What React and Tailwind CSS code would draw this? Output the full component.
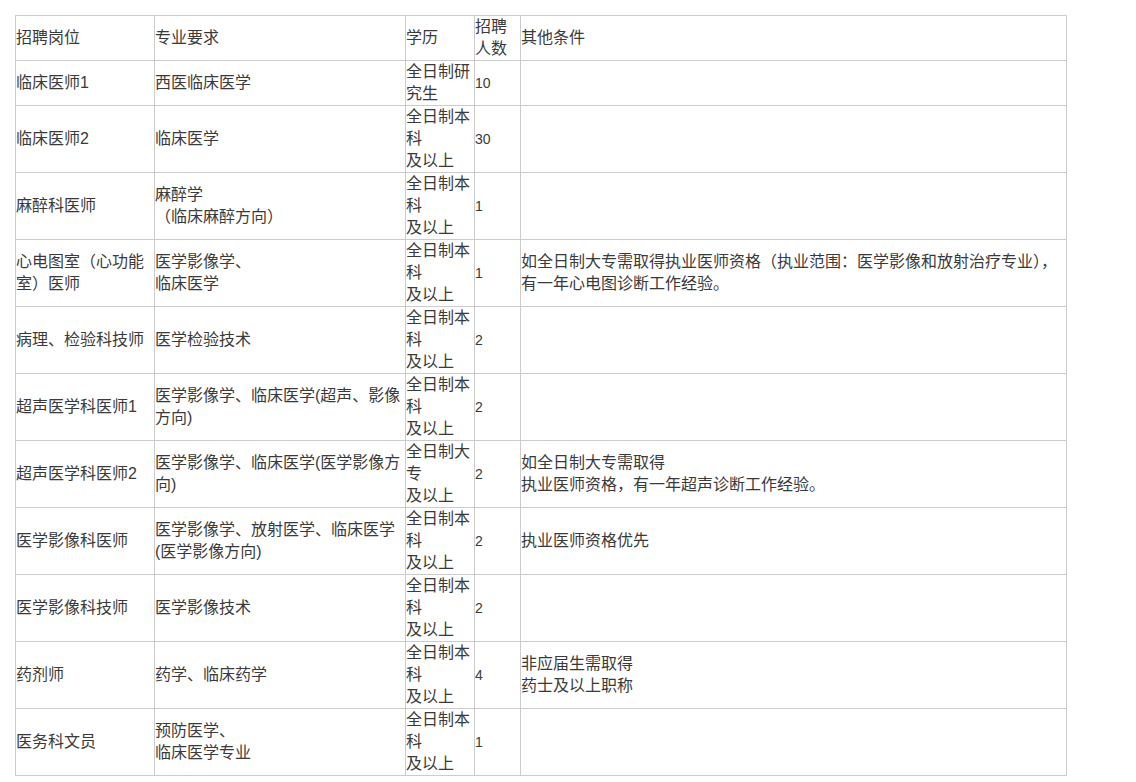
import React from 'react';

const rows = [
  { pos: '临床医师1', major: ['西医临床医学'], edu: ['全日制研', '究生'], num: '10', other: [] },
  { pos: '临床医师2', major: ['临床医学'], edu: ['全日制本', '科', '及以上'], num: '30', other: [] },
  { pos: '麻醉科医师', major: ['麻醉学', '（临床麻醉方向）'], edu: ['全日制本', '科', '及以上'], num: '1', other: [] },
  {
    pos: ['心电图室（心功能', '室）医师'],
    major: ['医学影像学、', '临床医学'],
    edu: ['全日制本', '科', '及以上'],
    num: '1',
    other: ['如全日制大专需取得执业医师资格（执业范围：医学影像和放射治疗专业），', '有一年心电图诊断工作经验。'],
  },
  { pos: '病理、检验科技师', major: ['医学检验技术'], edu: ['全日制本', '科', '及以上'], num: '2', other: [] },
  { pos: '超声医学科医师1', major: ['医学影像学、临床医学(超声、影像', '方向)'], edu: ['全日制本', '科', '及以上'], num: '2', other: [] },
  {
    pos: '超声医学科医师2',
    major: ['医学影像学、临床医学(医学影像方', '向)'],
    edu: ['全日制大', '专', '及以上'],
    num: '2',
    other: ['如全日制大专需取得', '执业医师资格，有一年超声诊断工作经验。'],
  },
  {
    pos: '医学影像科医师',
    major: ['医学影像学、放射医学、临床医学', '(医学影像方向)'],
    edu: ['全日制本', '科', '及以上'],
    num: '2',
    other: ['执业医师资格优先'],
  },
  { pos: '医学影像科技师', major: ['医学影像技术'], edu: ['全日制本', '科', '及以上'], num: '2', other: [] },
  { pos: '药剂师', major: ['药学、临床药学'], edu: ['全日制本', '科', '及以上'], num: '4', other: ['非应届生需取得', '药士及以上职称'] },
  { pos: '医务科文员', major: ['预防医学、', '临床医学专业'], edu: ['全日制本', '科', '及以上'], num: '1', other: [] },
];

const Lines = ({ value }) => {
  const list = Array.isArray(value) ? value : [value];
  return list.map((line, i) => (
    <span key={i} className="block whitespace-nowrap">
      {line}
    </span>
  ));
};

const cell = 'border border-[#cccccc] p-0 align-middle text-left font-normal overflow-visible';

export default function App() {
  return (
    <div className="bg-white pt-[15px] pl-[15px] pb-[6px] min-h-[782px] text-[16px] leading-[22px] text-[#3a3a3a] font-['Liberation_Sans','Noto_Sans_CJK_SC',sans-serif]">
      <table className="w-[1051px] border-collapse table-fixed">
        <colgroup>
          <col className="w-[139px]" />
          <col className="w-[251px]" />
          <col className="w-[69px]" />
          <col className="w-[46px]" />
          <col className="w-[546px]" />
        </colgroup>
        <thead>
          <tr className="h-[45px]">
            <th className={cell}>招聘岗位</th>
            <th className={cell}>专业要求</th>
            <th className={cell}>学历</th>
            <th className={cell}>
              <Lines value={['招聘', '人数']} />
            </th>
            <th className={cell}>其他条件</th>
          </tr>
        </thead>
        <tbody>
          {rows.map((r, i) => (
            <tr key={i} className={r.edu.length === 2 ? 'h-[45px]' : 'h-[67px]'}>
              <td className={cell}>
                <Lines value={r.pos} />
              </td>
              <td className={cell}>
                <Lines value={r.major} />
              </td>
              <td className={cell}>
                <Lines value={r.edu} />
              </td>
              <td className={`${cell} text-[14px]`}>{r.num}</td>
              <td className={cell}>{r.other.length > 0 && <Lines value={r.other} />}</td>
            </tr>
          ))}
        </tbody>
      </table>
    </div>
  );
}
